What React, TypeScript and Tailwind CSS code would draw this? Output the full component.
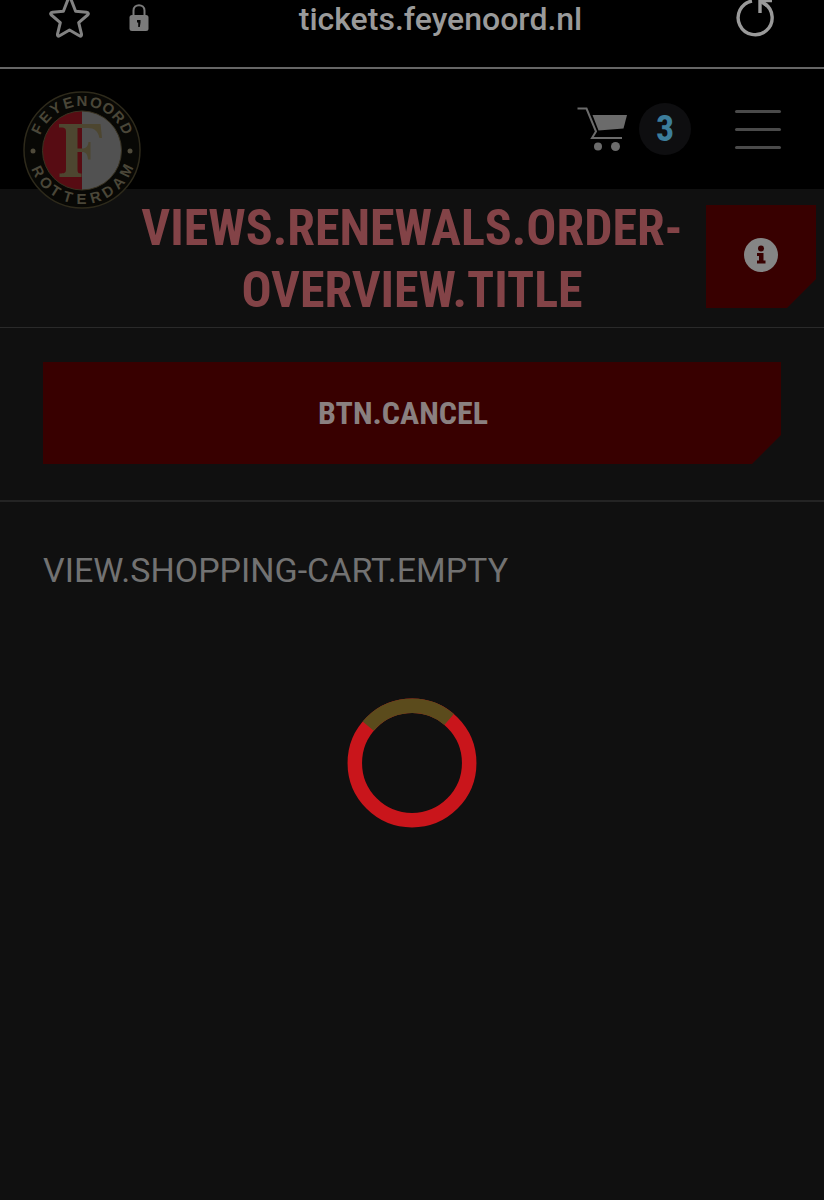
import React from 'react';

const CONDENSED = "font-['Roboto_Condensed','Liberation_Sans_Narrow','Liberation_Sans',sans-serif]";

const StarIcon: React.FC = () => (
  <svg width="42" height="40" viewBox="0 0 42 40" fill="none" stroke="#828282" strokeWidth="3" strokeLinejoin="round" aria-hidden="true">
    <path d="M21.5 -2 C22 -2 22.6 -1.5 23 -0.6 L27.6 11.2 L38.6 12.2 C40.6 12.5 40.8 14 39.6 15 L30.7 22.6 L33.5 34.2 C33.8 36 32.8 36.6 31.4 35.8 L21.5 30 L11.6 35.8 C10.2 36.6 9.2 36 9.5 34.2 L12.3 22.6 L3.4 15 C2.2 14 2.4 12.5 4.4 12.2 L15.4 11.2 L20 -0.6 C20.4 -1.5 21 -2 21.5 -2 Z" />
  </svg>
);

const LockIcon: React.FC = () => (
  <svg width="20" height="32" viewBox="0 0 20 32" aria-hidden="true">
    <path d="M4.5 17 V10.5 C4.5 3.5 15.5 3.5 15.5 10.5 V17" fill="none" stroke="#7b7b7b" strokeWidth="2" />
    <rect x="0.5" y="15" width="19" height="16" rx="2.5" fill="#7b7b7b" />
    <path d="M8 20 H11.5 V22.5 L10.8 27 H9.2 V22.5 H8 Z" fill="#050505" />
  </svg>
);

const ReloadIcon: React.FC = () => (
  <svg width="38" height="38" viewBox="0 0 38 38" fill="none" stroke="#9a9a9a" strokeWidth="3.4" aria-hidden="true">
    <path d="M16 1 A17 17 0 1 0 28.5 3.5" />
    <path d="M24 13 V0.5 H36" />
    <path d="M24 1 L31 5.5" />
  </svg>
);

const CartIcon: React.FC = () => (
  <svg width="50" height="44" viewBox="0 0 50 44" aria-hidden="true">
    <path d="M0.5 1.5 H9.5 L19 24.5 L15 31 H45" fill="none" stroke="#6b6b6b" strokeWidth="2" />
    <path d="M15.5 8 H50 L46.5 21.5 L21.5 23.5 Z" fill="#6b6b6b" />
    <circle cx="21" cy="39.5" r="4" fill="#6b6b6b" />
    <circle cx="38.5" cy="39.5" r="4.5" fill="#6b6b6b" />
  </svg>
);

// x, y and rotation of every letter of a word set around the crest
const arcLetters = (word: string, radius: number, step: number, below: boolean) => {
  const half = 5.4;
  const points = word.split('').map((_, i) => {
    const turn = (i - (word.length - 1) / 2) * step * (below ? -1 : 1);
    const rad = (turn * Math.PI) / 180;
    const dir = below ? -1 : 1;
    return {
      x: 59 + dir * radius * Math.sin(rad) - half * Math.cos(rad),
      y: 59 - dir * radius * Math.cos(rad) - half * Math.sin(rad),
      turn,
    };
  });
  return {
    x: points.map(p => p.x.toFixed(2)).join(' '),
    y: points.map(p => p.y.toFixed(2)).join(' '),
    rotate: points.map(p => p.turn).join(' '),
  };
};

const ClubLogo: React.FC = () => (
  <svg width="118" height="118" viewBox="0 0 118 118" role="img" aria-label="Feyenoord Rotterdam">
    <circle cx="59" cy="59" r="58" fill="#080805" stroke="#2e2a1b" strokeWidth="1.5" />
    <path d="M59 20 A39.5 39.5 0 0 0 59 99 Z" fill="#570c13" />
    <path d="M59 20 A39.5 39.5 0 0 1 59 99 Z" fill="#515151" />
    <circle cx="59" cy="59.5" r="39.5" fill="none" stroke="#3a3321" strokeWidth="1" />
    {/* centre initial */}
    <path
      d="M36 33 H77.5 L79 47 H76.5 C75 40 71.5 37 65 37 H54.5 V57.5 H59 C63.5 57.5 65 55 65.5 51 H67.5 V68.5 H65 C64.5 63 63 61 59 61 H54.5 V78 C54.5 82 55.5 82.5 58.5 82.5 V86 H36.5 V82.5 C41.5 82.5 43 82 43 78 V41 C43 37 41.5 36.5 36 36.5 Z"
      fill="#4d4630"
    />
    <g fill="#4a4638" className="font-['Liberation_Sans',sans-serif] text-[15px] font-bold">
      <text {...arcLetters('FEYENOORD', 44, 16, false)}>FEYENOORD</text>
      <text {...arcLetters('ROTTERDAM', 54, 16, true)}>ROTTERDAM</text>
    </g>
    <circle cx="10" cy="60" r="2.5" fill="#4f4a3a" />
    <circle cx="107" cy="60" r="2.5" fill="#4f4a3a" />
  </svg>
);

const InfoIcon: React.FC = () => (
  <svg width="34" height="34" viewBox="0 0 34 34" aria-hidden="true">
    <circle cx="17" cy="17" r="17" fill="#858585" />
    <circle cx="17" cy="10.5" r="3" fill="#380000" />
    <path d="M13 15 H19.5 V22.5 H21.5 V25.5 H13 V22.5 H15 V18 H13 Z" fill="#380000" />
  </svg>
);

const Spinner: React.FC = () => (
  <svg width="130" height="130" viewBox="0 0 130 130" fill="none" strokeWidth="14.5" role="status" aria-label="Loading">
    <circle cx="65" cy="65" r="57.2" stroke="#c9151b" />
    <path d="M21.2 28.2 A57.2 57.2 0 0 1 102.1 21.5" stroke="#5b4b1c" />
  </svg>
);

const App: React.FC = () => {
  return (
    <div className="min-h-screen bg-[#101010] font-['Roboto',sans-serif]">
      {/* Browser bar */}
      <div className="h-[69px] flex items-start justify-between pl-12 pr-[50px] bg-black border-b-2 border-[#666666]">
        <div className="flex items-start gap-[39px]">
          <button type="button" aria-label="Bookmark"><StarIcon /></button>
          <button type="button" aria-label="Site security"><LockIcon /></button>
        </div>
        <span className="pr-1 text-[32px] leading-[38px] font-medium text-[#9a9a9a]">tickets.feyenoord.nl</span>
        <button type="button" aria-label="Reload"><ReloadIcon /></button>
      </div>

      {/* Site header, the crest hangs over its lower edge */}
      <header className="h-[120px] flex items-start justify-between pl-[23px] pr-[43px] bg-black">
        <a href="#" className="relative z-10 mt-[22px]"><ClubLogo /></a>
        <div className="flex items-center mt-[34px]">
          <a href="#cart" aria-label="Shopping cart, 3 items" className="flex items-center gap-3">
            <CartIcon />
            <span className={`w-[52px] h-[52px] rounded-full bg-[#0e0e10] flex items-center justify-center text-4xl font-bold text-[#3c7d9b] ${CONDENSED}`}>3</span>
          </a>
          <button type="button" aria-label="Menu" className="ml-11 flex flex-col gap-[15px]">
            <span className="block w-[46px] h-[3px] rounded-full bg-[#4a4a4a]" />
            <span className="block w-[46px] h-[3px] rounded-full bg-[#4a4a4a]" />
            <span className="block w-[46px] h-[3px] rounded-full bg-[#4a4a4a]" />
          </button>
        </div>
      </header>

      <main>
        {/* Page title */}
        <section className="grid grid-cols-[110px_1fr_110px] px-2 pt-2 pb-[6px] border-b border-[#2a2a2a]">
          <h1 className={`col-start-2 text-center text-[50px] leading-[62px] font-bold text-[#834347] ${CONDENSED}`}>
            VIEWS.RENEWALS.ORDER-<br />OVERVIEW.TITLE
          </h1>
          <button
            type="button"
            aria-label="Information"
            className="mt-2 h-[103px] pb-1 flex items-center justify-center bg-[#380000] [clip-path:polygon(0_0,100%_0,100%_calc(100%-29px),calc(100%-29px)_100%,0_100%)]"
          >
            <InfoIcon />
          </button>
        </section>

        <section className="px-[43px] pt-[34px] pb-9 border-b-2 border-[#242424]">
          <button
            type="button"
            className={`w-full h-[102px] pr-[18px] bg-[#380000] text-[32px] font-bold text-[#8a8080] [clip-path:polygon(0_0,100%_0,100%_calc(100%-29px),calc(100%-29px)_100%,0_100%)] ${CONDENSED}`}
          >
            BTN.CANCEL
          </button>
        </section>

        <section className="px-[43px] pt-12">
          <p className="text-[34px] leading-10 text-[#727272]">VIEW.SHOPPING-CART.EMPTY</p>
          <div className="flex justify-center pt-[108px]">
            <Spinner />
          </div>
        </section>
      </main>
    </div>
  );
};

export default App;
